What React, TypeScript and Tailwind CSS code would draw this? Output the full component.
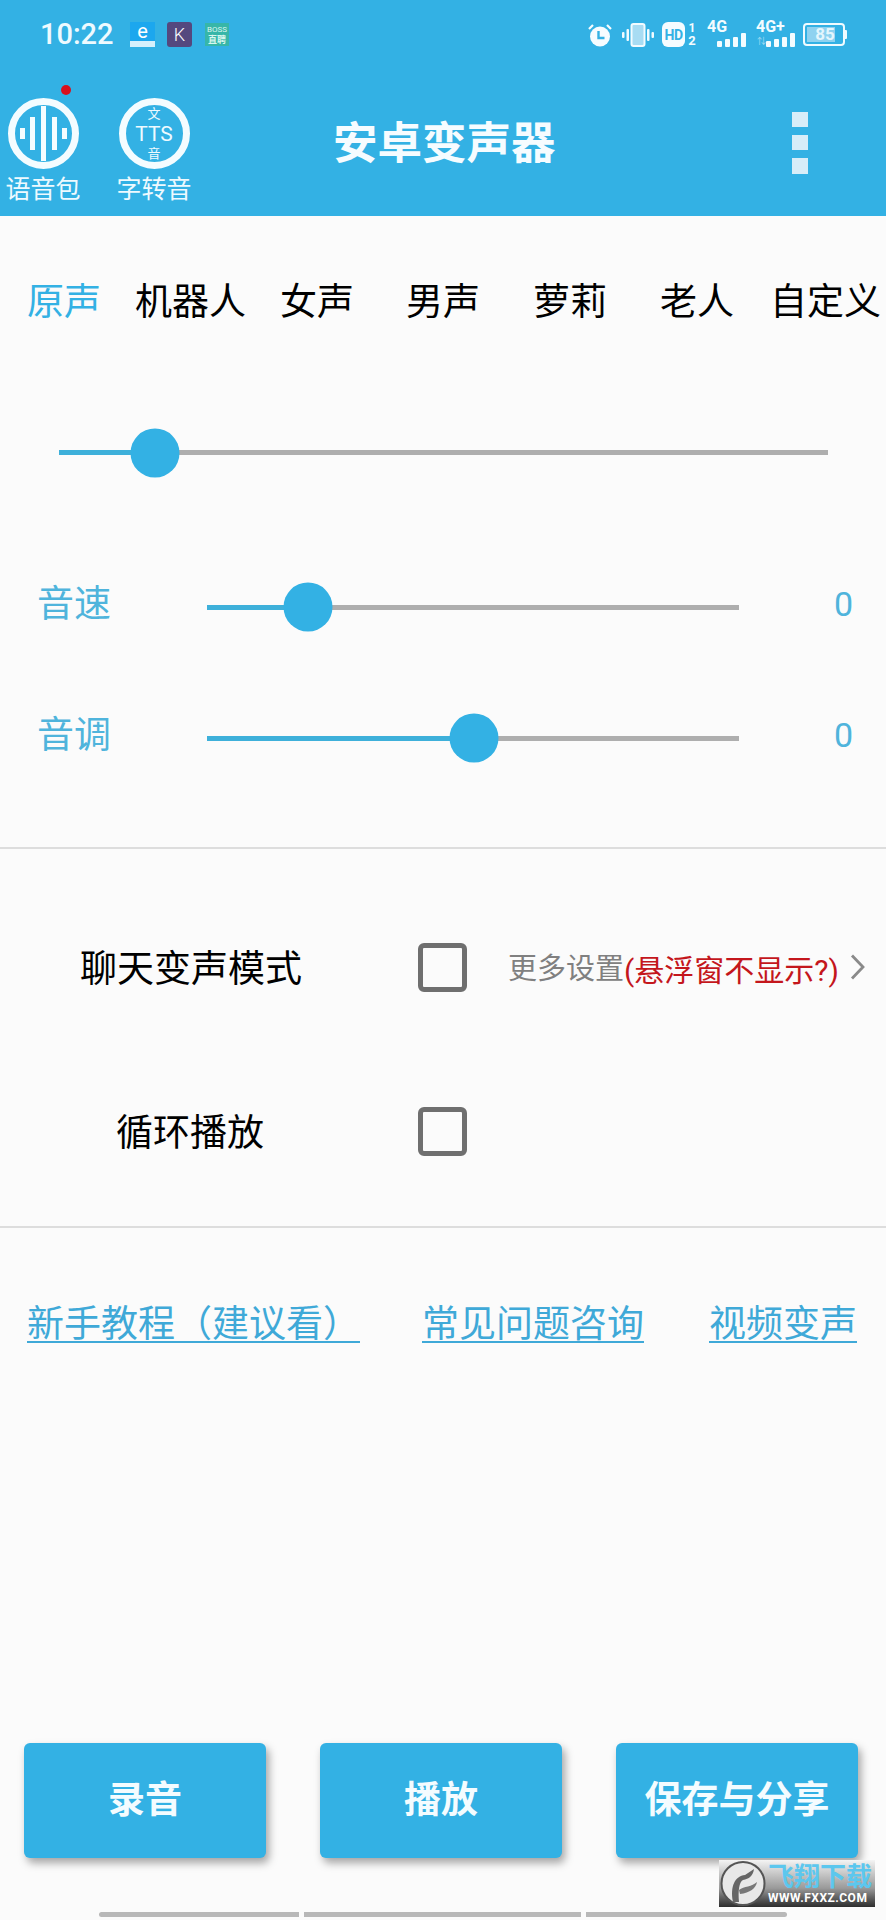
import React from "react";

const blue = "bg-[#33b1e4]";

const tabs = [
  { label: "原声", width: "w-[108px]", active: true },
  { label: "机器人", width: "w-[145px]" },
  { label: "女声", width: "w-[126px]" },
  { label: "男声", width: "w-[127px]" },
  { label: "萝莉", width: "w-[127px]" },
  { label: "老人", width: "w-[110px]" },
  { label: "自定义", width: "w-[110px]" },
];

const Slider = ({ percent, className }: { percent: number; className: string }) => (
  <div className={`relative h-[5px] bg-[#aeaeae] ${className}`}>
    <div className="h-full bg-[#3eb0da]" style={{ width: `${percent}%` }} />
    <div
      className={`absolute top-1/2 h-[49px] w-[49px] -translate-x-1/2 -translate-y-1/2 rounded-full ${blue}`}
      style={{ left: `${percent}%` }}
    />
  </div>
);

const Checkbox = () => (
  <div className="h-[49px] w-[49px] rounded-[6px] border-[5px] border-[#6f6f6f]" />
);

const VoiceIcon = () => (
  <svg className="shrink-0" width="71" height="71" viewBox="0 0 71 71">
    <circle cx="35.5" cy="35.5" r="32" fill="none" stroke="#f4fcff" strokeWidth="7" />
    <g fill="#f4fcff">
      <rect x="12" y="30" width="5" height="11" />
      <rect x="22" y="19" width="5" height="33" />
      <rect x="33" y="8" width="5" height="55" />
      <rect x="44" y="19" width="5" height="33" />
      <rect x="54" y="30" width="5" height="11" />
    </g>
  </svg>
);

const TtsIcon = () => (
  <div className="flex h-[71px] w-[71px] shrink-0 flex-col items-center justify-center rounded-full border-[7px] border-[#f4fcff] text-[#eefaff]">
    <span className="text-[13px] leading-[14px]">文</span>
    <span className="text-[21px] leading-[26px]">TTS</span>
    <span className="text-[13px] leading-[14px]">音</span>
  </div>
);

const Alarm = () => (
  <svg width="24" height="24" viewBox="0 0 24 24">
    <circle cx="12" cy="13.5" r="10" fill="#f6fcff" />
    <path d="M10.5 8v7h6" fill="none" stroke="#33b1e4" strokeWidth="2.4" />
    <path d="M1 6 5 2M23 6l-4-4" fill="none" stroke="#f6fcff" strokeWidth="2.2" />
  </svg>
);

const Vibrate = () => (
  <svg width="32" height="24" viewBox="0 0 32 24">
    <rect x="9.5" y="1" width="13" height="22" rx="2" fill="#a8dcf3" stroke="#f2fbff" strokeWidth="2" />
    <rect x="4.5" y="6" width="2.5" height="12" rx="1" fill="#f2fbff" />
    <rect x="0" y="9" width="2.5" height="6" rx="1" fill="#f2fbff" />
    <rect x="25" y="6" width="2.5" height="12" rx="1" fill="#f2fbff" />
    <rect x="29.5" y="9" width="2.5" height="6" rx="1" fill="#f2fbff" />
  </svg>
);

const Signal = ({ label, plus }: { label: string; plus?: boolean }) => (
  <div className="relative h-[25px] w-[39px] text-[#f4fcff]">
    <span className="absolute left-0 top-[-4px] whitespace-nowrap text-[16px] font-bold leading-[18px]">{label}</span>
    {plus && <span className="absolute left-[1px] top-[14px] text-[9px] leading-[10px] text-[#a8dcf3]">⇅</span>}
    <div className="absolute bottom-0 right-0 flex items-end gap-[3px]">
      <div className="h-[6px] w-[5px] rounded-[1px] bg-[#f4fcff]" />
      <div className="h-[8px] w-[5px] rounded-[1px] bg-[#f4fcff]" />
      <div className="h-[10px] w-[5px] rounded-[1px] bg-[#f4fcff]" />
      <div className="h-[14px] w-[5px] rounded-[1px] bg-[#f4fcff]" />
    </div>
  </div>
);

const StatusBar = () => (
  <div className="flex h-[69px] items-center pl-[40px] pr-[39px]">
    <span className="w-[90px] text-[29px] font-medium leading-none text-[#eefaff]">10:22</span>
    <div className="flex h-[25px] w-[25px] flex-col items-center justify-between bg-[#1ca7ee]">
      <span className="text-[20px] leading-[19px] text-white">e</span>
      <div className="h-[6px] w-full bg-[#d6f0fc]" />
    </div>
    <div className="ml-[12px] flex h-[25px] w-[25px] items-center justify-center rounded-[3px] bg-[#54487e] text-[18px] font-light leading-none text-white">
      K
    </div>
    <div className="ml-[13px] flex h-[23px] w-[24px] flex-col items-center justify-center bg-[#37b6a8] text-[#d9f6ef]">
      <span className="text-[8px] leading-[10px]">BOSS</span>
      <span className="text-[9px] font-bold leading-[10px]">直聘</span>
    </div>
    <div className="ml-auto flex items-center">
      <Alarm />
      <div className="ml-[10px]">
        <Vibrate />
      </div>
      <div className="ml-[8px] flex h-[25px] w-[23px] items-center justify-center rounded-[6px] bg-[#f6fcff] text-[14px] font-bold leading-none tracking-[-0.5px] text-[#33b1e4]">
        HD
      </div>
      <div className="ml-[1px] flex w-[12px] flex-col items-center text-[#f4fcff]">
        <span className="text-[12px] font-bold leading-[12px]">1</span>
        <span className="text-[13px] font-bold leading-[13px]">2</span>
      </div>
      <div className="ml-[9px]">
        <Signal label="4G" />
      </div>
      <div className="ml-[10px]">
        <Signal label="4G+" plus />
      </div>
      <div className="ml-[8px] flex items-center">
        <div className="flex h-[23px] w-[42px] items-center rounded-[4px] border-2 border-[#f0fbff] p-[2px]">
          <div className="flex h-full w-[82%] items-center justify-end bg-[#8fd2f0] text-[17px] font-bold leading-none text-[#e4f6fd]">
            85
          </div>
        </div>
        <div className="h-[9px] w-[2px] rounded-r-[1px] bg-[#f0fbff]" />
      </div>
    </div>
  </div>
);

const Toolbar = () => (
  <div className="flex h-[147px] pr-[78px]">
    <div className="relative ml-[5px] flex w-[76px] flex-col items-center pt-[29px]">
      <div className="absolute left-[56px] top-[16px] h-[10px] w-[10px] rounded-full bg-[#d8101c]" />
      <VoiceIcon />
      <span className="mt-[4px] whitespace-nowrap text-[25px] leading-[34px] text-[#eefaff]">语音包</span>
    </div>
    <div className="ml-[36px] flex w-[74px] flex-col items-center pt-[29px]">
      <TtsIcon />
      <span className="mt-[4px] whitespace-nowrap text-[25px] leading-[34px] text-[#eefaff]">字转音</span>
    </div>
    <h1 className="ml-[142px] mt-[45px] h-[60px] whitespace-nowrap text-[44.5px] font-bold leading-[60px] text-[#f6fcff]">
      安卓变声器
    </h1>
    <div className="ml-auto mt-[43px] flex flex-col gap-[8px]">
      <div className="h-[15px] w-[16px] bg-[#d8edf8]" />
      <div className="h-[15px] w-[16px] bg-[#d8edf8]" />
      <div className="h-[16px] w-[16px] bg-[#d8edf8]" />
    </div>
  </div>
);

const App = () => {
  return (
    <div className="relative flex h-[1920px] w-[886px] flex-col overflow-hidden bg-[#fbfbfb] font-['Roboto','Noto_Sans_CJK_SC',sans-serif]">
      <header className={`h-[216px] ${blue}`}>
        <StatusBar />
        <Toolbar />
      </header>

      <div className="mt-[62px] flex h-[50px] items-center pl-[27px] text-[37px] leading-[50px] text-black">
        {tabs.map((t) => (
          <span key={t.label} className={`shrink-0 whitespace-nowrap ${t.width} ${t.active ? "text-[#33b1e4]" : ""}`}>
            {t.label}
          </span>
        ))}
      </div>

      <div className="mt-[122px] pl-[59px]">
        <Slider percent={12.5} className="w-[769px]" />
      </div>

      <div className="mt-[118px] flex h-[60px] items-center pl-[37px] text-[37px] text-[#4fb4dc]">
        <span className="mt-[4px] w-[170px]">音速</span>
        <Slider percent={19} className="mt-[8px] w-[532px]" />
        <span className="ml-[95px] mt-[2px] text-[34px]">0</span>
      </div>
      <div className="mt-[71px] flex h-[60px] items-center pl-[37px] text-[37px] text-[#4fb4dc]">
        <span className="mt-[4px] w-[170px]">音调</span>
        <Slider percent={50.1} className="mt-[8px] w-[532px]" />
        <span className="ml-[95px] mt-[2px] text-[34px]">0</span>
      </div>

      <div className="mt-[83px] h-[2px] bg-[#dddddd]" />

      <div className="mt-[93px] flex h-[50px] items-center text-[37px] text-black">
        <span className="ml-[80px] mt-[5px] w-[338px]">聊天变声模式</span>
        <Checkbox />
        <span className="ml-[41px] mt-[6px] text-[29px] text-[#808080]">更多设置</span>
        <span className="mt-[6px] whitespace-nowrap text-[30px] text-[#c4161c]">(悬浮窗不显示?)</span>
        <svg className="ml-[11px]" width="15" height="26" viewBox="0 0 15 26">
          <path d="M2 1.5l11 11.5L2 24.5" fill="none" stroke="#8a8a8a" strokeWidth="2.8" />
        </svg>
      </div>

      <div className="mt-[114px] flex h-[50px] items-center text-[37px] text-black">
        <span className="ml-[116px] mt-[6px] w-[302px]">循环播放</span>
        <Checkbox />
      </div>

      <div className="mt-[70px] h-[2px] bg-[#dddddd]" />

      <div className="mt-[72px] flex h-[50px] items-center text-[37px] leading-[50px] text-[#3fa9d8] underline underline-offset-[4px] decoration-2">
        <span className="ml-[27px] w-[395px]">新手教程（建议看）</span>
        <span className="w-[287px]">常见问题咨询</span>
        <span>视频变声</span>
      </div>

      <div className="mt-auto flex gap-[54px] pl-[24px]">
        <button className={`h-[115px] w-[242px] rounded-[6px] text-[37px] font-bold text-[#f4fcff] shadow-[3px_5px_8px_rgba(0,0,0,0.35)] ${blue}`}>
          录音
        </button>
        <button className={`h-[115px] w-[242px] rounded-[6px] text-[37px] font-bold text-[#f4fcff] shadow-[3px_5px_8px_rgba(0,0,0,0.35)] ${blue}`}>
          播放
        </button>
        <button className={`h-[115px] w-[242px] rounded-[6px] text-[37px] font-bold text-[#f4fcff] shadow-[3px_5px_8px_rgba(0,0,0,0.35)] ${blue}`}>
          保存与分享
        </button>
      </div>

      <div className="mb-[3px] mt-[54px] flex gap-[5px] pl-[99px]">
        <div className="h-[5px] w-[200px] rounded-l-full bg-[#b8b8b8]" />
        <div className="h-[5px] w-[277px] bg-[#b8b8b8]" />
        <div className="h-[5px] w-[201px] rounded-r-full bg-[#b8b8b8]" />
      </div>

      {/* site watermark sits over the page corner */}
      <div className="absolute left-[719px] top-[1860px] flex h-[47px] w-[156px] items-center overflow-hidden bg-gradient-to-b from-[#f4f4f4] via-[#9a9a9a] via-60% to-[#2e2e2e]">
        <svg width="48" height="47" viewBox="0 0 48 47" className="shrink-0">
          <circle cx="24" cy="23.5" r="21.5" fill="#e8e8e8" stroke="#555" strokeWidth="2" />
          <path d="M14 42c-3-16 2-26 12-27l9-6c-1 7-5 10-11 11-4 2-5 11-4 22z" fill="#666" />
          <path d="M20 30c5-4 13-3 18-8-1 6-7 11-17 12z" fill="#777" />
        </svg>
        <div className="ml-[1px] flex min-w-0 flex-col items-start">
          <span className="whitespace-nowrap text-[26px] font-bold leading-[30px] text-[#5cc7ee]">飞翔下载</span>
          <span className="whitespace-nowrap text-[12px] font-bold leading-[13px] tracking-[0.5px] text-white">WWW.FXXZ.COM</span>
        </div>
      </div>
    </div>
  );
};

export default App;
